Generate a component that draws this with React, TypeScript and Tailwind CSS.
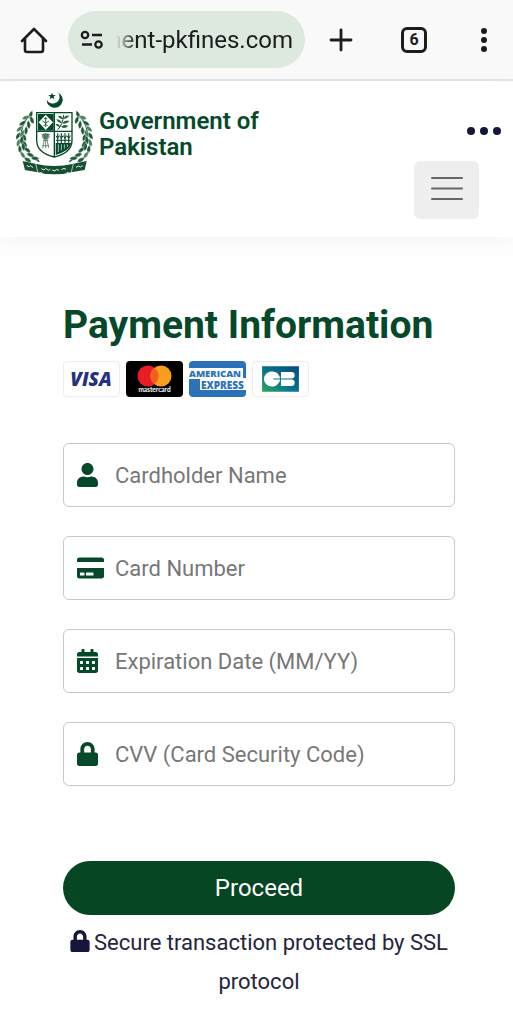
import React, { useState } from 'react';
import { FaUser, FaCreditCard, FaCalendarAlt, FaLock } from 'react-icons/fa';

interface Field {
  id: string;
  placeholder: string;
  icon: React.ReactNode;
}

const fields: Field[] = [
  { id: 'name', placeholder: 'Cardholder Name', icon: <FaUser className="h-6 w-[21px]" /> },
  { id: 'number', placeholder: 'Card Number', icon: <FaCreditCard className="h-6 w-[27px]" /> },
  { id: 'expiry', placeholder: 'Expiration Date (MM/YY)', icon: <FaCalendarAlt className="h-6 w-[21px]" /> },
  { id: 'cvv', placeholder: 'CVV (Card Security Code)', icon: <FaLock className="h-6 w-[21px]" /> }
];

// Leaves along the left branch: x, y, angle
const leaves = [
  [62, 90, -70], [47, 98, -20], [66, 106, -110], [37, 115, -35], [56, 120, -95],
  [28, 132, -45], [48, 138, -85], [24, 153, -60], [43, 158, -110], [25, 174, -75],
  [44, 177, -125], [30, 194, -100], [52, 195, -145], [39, 211, -125], [62, 210, -160],
  [54, 225, -150], [76, 220, -175], [36, 146, -60], [35, 166, -80], [40, 186, -100]
];

const Branch: React.FC = () => (
  <g>
    <path d="M60 90 C24 125 20 185 88 230" fill="none" stroke="#195b35" strokeWidth="4" />
    {leaves.map(([x, y, a], i) => (
      <path
        key={i}
        d="M-12 0 Q0 -11 14 0 Q0 11 -12 0Z"
        transform={`translate(${x} ${y}) rotate(${a})`}
        fill={i % 4 === 1 ? '#4f8062' : '#1d5a38'}
        stroke="#fff"
        strokeWidth="1"
      />
    ))}
  </g>
);

const Emblem: React.FC = () => (
  <svg viewBox="18 18 231 258" className="h-[86px] w-[77px] shrink-0" aria-hidden="true">
    <path d="M145 23 A24 24 0 1 1 110 44 A20.5 20.5 0 1 0 145 23Z" fill="#06492a" />
    <path d="M126 23 l3 7 h8 l-6 5 2 8 -7 -5 -7 5 2 -8 -6 -5 h8Z" fill="#06492a" />
    <Branch />
    <g transform="translate(266 0) scale(-1 1)">
      <Branch />
    </g>
    <path d="M80 83 H186 V166 Q186 204 133 216 Q80 204 80 166Z" fill="#fff" stroke="#06492a" strokeWidth="4" />
    <path d="M84 87 H131 V137 H84Z" fill="#06492a" />
    <path d="M107 89 L129 112 107 135 86 112Z" fill="#fff" />
    <path d="M107 96 V126 M97 108 L107 114 117 108 M101 123 L107 117 113 123 M102 101 H112" fill="none" stroke="#286342" strokeWidth="3" />
    <path d="M80 139 H186 M133 84 V215" stroke="#06492a" strokeWidth="4" />
    <path d="M143 134 Q158 120 161 90" fill="none" stroke="#06492a" strokeWidth="3" />
    <path
      d="M159 102 Q148 102 144 92 Q157 91 159 102Z M160 102 Q170 103 178 92 Q164 90 160 102Z M155 114 Q143 114 139 103 Q152 103 155 114Z M157 115 Q168 119 179 108 Q164 103 157 115Z M150 125 Q140 127 137 117 Q149 115 150 125Z M153 125 Q164 134 175 123 Q162 116 153 125Z"
      fill="#286342"
    />
    <path d="M94 148 Q107 141 120 148 L113 161 H101Z" fill="#6c9279" />
    <path d="M96 154 L103 164 M101 147 L105 164 M107 145 V190 M113 147 L109 164 M119 154 L111 164 M103 164 L98 189 M111 164 L116 189 M99 166 H115 M97 182 H117" stroke="#286342" strokeWidth="2" />
    <path d="M137 174 H184 Q180 197 137 210Z" fill="#06492a" />
    <path d="M143 145 V174 M154 145 V174 M165 145 V174 M176 145 V174" stroke="#286342" strokeWidth="4" />
    <path d="M138 152 L143 160 148 152 M149 152 L154 160 159 152 M160 152 L165 160 170 152 M171 152 L176 160 181 152 M138 166 H182" fill="none" stroke="#06492a" strokeWidth="3" />
    <path d="M145 178 V201 M154 178 V196 M163 178 V191 M172 178 V186" stroke="#fff" strokeWidth="2" />
    <path d="M38 228 L76 236 Q133 250 190 236 L230 228 224 255 192 260 Q133 276 75 260 L45 255Z" fill="#174f31" />
    <path d="M77 236 L84 265 97 262 M190 236 L183 265 169 262" fill="none" stroke="#fff" strokeWidth="2" />
    <path d="M50 242 l8 3 4 -3 7 6 M94 251 l8 4 5 -5 8 6 6 -3 M126 255 l9 3 4 -5 8 3 M154 254 l8 -4 6 3 M198 247 l8 -4 5 3 7 -4" fill="none" stroke="#e5eee8" strokeWidth="3" />
  </svg>
);

const BrowserBar: React.FC = () => (
  <div className="flex h-[81px] items-center border-b-2 border-[#e4e4e4] bg-[#f9f9f9] px-5 text-[#1b1c1b]">
    <button type="button" aria-label="Home">
      <svg viewBox="0 0 28 28" className="size-7" fill="none" stroke="currentColor" strokeWidth="2.6" strokeLinejoin="round" strokeLinecap="round">
        <path d="M2 15 L14 3 26 15 M5 13 V24 Q5 26 7 26 H21 Q23 26 23 24 V13" />
      </svg>
    </button>
    <div className="ml-5 flex h-[57px] min-w-0 flex-1 items-center rounded-full bg-[#dde8df] px-3">
      <svg viewBox="0 0 24 20" className="mr-3 h-5 w-6 shrink-0" fill="none" stroke="currentColor" strokeWidth="2.3">
        <circle cx="5" cy="5" r="3.2" />
        <path d="M12 5 H22 M2 14.5 H12" />
        <circle cx="18.5" cy="14.5" r="3.2" />
      </svg>
      <div className="flex min-w-0 flex-1 justify-end overflow-hidden text-2xl whitespace-nowrap [mask-image:linear-gradient(to_right,transparent,black_20px)]">
        <span>ment-pkfines.com</span>
      </div>
    </div>
    <button type="button" aria-label="New tab" className="ml-6">
      <svg viewBox="0 0 24 24" className="size-6" stroke="currentColor" strokeWidth="2.8" strokeLinecap="round">
        <path d="M12 2 V22 M2 12 H22" />
      </svg>
    </button>
    <button type="button" aria-label="Tabs" className="ml-12 flex size-[26px] items-center justify-center rounded-md border-[3px] border-current text-base leading-none font-bold">
      6
    </button>
    <button type="button" aria-label="Browser menu" className="ml-12">
      <svg viewBox="0 0 18 24" className="h-6 w-[18px]" fill="currentColor">
        <circle cx="9" cy="3" r="3" />
        <circle cx="9" cy="12" r="3" />
        <circle cx="9" cy="21" r="3" />
      </svg>
    </button>
  </div>
);

const CardLogos: React.FC = () => (
  <div className="flex gap-[6px]">
    <svg viewBox="0 0 57 36" className="h-9 w-[57px] rounded-sm border border-[#ededed]" role="img" aria-label="Visa">
      <text x="28" y="25" textAnchor="middle" fontFamily="Open Sans, sans-serif" fontWeight="800" fontStyle="italic" fontSize="20" fill="#26337a">VISA</text>
    </svg>
    <svg viewBox="0 0 57 36" className="h-9 w-[57px] rounded-sm" role="img" aria-label="Mastercard">
      <rect width="57" height="36" fill="#000" />
      <circle cx="22" cy="15" r="10.5" fill="#e81d26" />
      <circle cx="35" cy="15" r="10.5" fill="#f79e1f" />
      <path d="M28.5 6.7 A10.5 10.5 0 0 1 28.5 23.3 A10.5 10.5 0 0 1 28.5 6.7Z" fill="#f2601f" />
      <text x="28.5" y="31" textAnchor="middle" fontFamily="Lato, sans-serif" fontWeight="700" fontSize="6.5" fill="#fff">mastercard</text>
    </svg>
    <svg viewBox="0 0 57 36" className="h-9 w-[57px] rounded-sm" role="img" aria-label="American Express">
      <rect width="57" height="36" fill="#2b72b9" />
      <path d="M0 7 H54 V17 H57 V29 H11 V18 H0Z" fill="#fff" />
      <text x="0" y="16" fontFamily="Open Sans, sans-serif" fontWeight="800" fontSize="9.5" fill="#2b72b9">AMERICAN</text>
      <text x="12" y="28" fontFamily="Open Sans, sans-serif" fontWeight="800" fontSize="10" fill="#2b72b9">EXPRESS</text>
    </svg>
    <svg viewBox="0 0 57 36" className="h-9 w-[57px] rounded-sm border border-[#ededed]" role="img" aria-label="CB">
      <defs>
        <linearGradient id="cb" x1="0" y1="1" x2="1" y2="0">
          <stop offset="0" stopColor="#35a65a" />
          <stop offset="0.4" stopColor="#087b8c" />
          <stop offset="1" stopColor="#08477f" />
        </linearGradient>
      </defs>
      <rect x="9" y="4.5" width="39" height="27" fill="url(#cb)" />
      <path d="M28 17.5 H21 V18.5 H28 A8.5 8 0 1 1 28 17.5Z M29 10.5 H40 A3.5 3.5 0 0 1 40 17.5 H29Z M29 18.5 H40 A3.5 3.5 0 0 1 40 25.5 H29Z" fill="#fff" />
    </svg>
  </div>
);

const App: React.FC = () => {
  const [values, setValues] = useState<Record<string, string>>({});

  const handleChange = (e: React.ChangeEvent<HTMLInputElement>) => {
    const { id, value } = e.target;
    setValues(prev => ({ ...prev, [id]: value }));
  };

  return (
    <div className="min-h-screen bg-[#fefefe] font-[Roboto,sans-serif]">
      <BrowserBar />

      <header className="flex items-start justify-between bg-white pt-[10px] pr-3 pb-[18px] pl-4 shadow-[0_4px_16px_rgba(0,0,0,0.04)]">
        <a href="#" className="flex items-center gap-[6px] text-2xl leading-[26px] font-semibold text-[#06492a]">
          <Emblem />
          <span>
            Government of<br />Pakistan
          </span>
        </a>
        <div className="flex flex-col items-end gap-[26px] pt-9">
          <button type="button" aria-label="More" className="flex gap-[5px] text-[#16163a]">
            <span className="size-2 rounded-full bg-current" />
            <span className="size-2 rounded-full bg-current" />
            <span className="size-2 rounded-full bg-current" />
          </button>
          <button type="button" aria-label="Toggle navigation" className="mr-[22px] flex h-[58px] w-[65px] items-center justify-center rounded-md bg-[#eeeeee]">
            <svg viewBox="0 0 32 26" className="h-[26px] w-8" stroke="#666" strokeWidth="2" strokeLinecap="round">
              <path d="M1 1 H31 M1 11.5 H31 M1 22 H31" />
            </svg>
          </button>
        </div>
      </header>

      <main className="pt-16 pr-[58px] pb-6 pl-[63px]">
        <h1 className="text-[39px] leading-[48px] font-bold text-[#06492a]">Payment Information</h1>
        <div className="mt-3">
          <CardLogos />
        </div>

        <form className="mt-[46px]" onSubmit={e => e.preventDefault()}>
          <div className="flex flex-col gap-[29px]">
            {fields.map(field => (
              <div key={field.id} className="relative">
                <label htmlFor={field.id} aria-label={field.placeholder} className="absolute inset-y-0 left-[14px] flex items-center text-[#06492a]">
                  {field.icon}
                </label>
                <input
                  id={field.id}
                  type="text"
                  autoComplete="off"
                  placeholder={field.placeholder}
                  value={values[field.id] || ''}
                  onChange={handleChange}
                  className="h-16 w-full rounded-md border border-[#c8c8c8] bg-white pr-3 pl-[51px] text-[22px] text-[#212529] placeholder:text-[#777777]"
                />
              </div>
            ))}
          </div>
          <button type="submit" className="mt-[75px] h-[54px] w-full rounded-full bg-[#064622] text-2xl text-white">
            Proceed
          </button>
        </form>

        <p className="mt-2 text-center text-[22px] leading-[39px] text-[#25253c]">
          <FaLock className="mr-1 inline h-[22px] w-5 align-[-2px] text-[#16163a]" />
          Secure transaction protected by SSL protocol
        </p>
      </main>
    </div>
  );
};

export default App;
